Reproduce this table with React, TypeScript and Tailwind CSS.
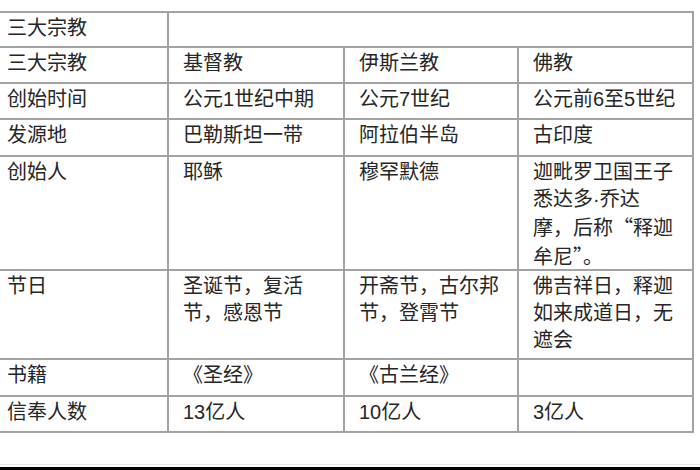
import { Fragment } from "react";

type Cell = { lines: string[]; span?: number };

// rows of the comparison table; explicit lines to match wrapping in the source
const rows: Cell[][] = [
  [{ lines: ["三大宗教"] }, { lines: [""], span: 3 }],
  [{ lines: ["三大宗教"] }, { lines: ["基督教"] }, { lines: ["伊斯兰教"] }, { lines: ["佛教"] }],
  [{ lines: ["创始时间"] }, { lines: ["公元1世纪中期"] }, { lines: ["公元7世纪"] }, { lines: ["公元前6至5世纪"] }],
  [{ lines: ["发源地"] }, { lines: ["巴勒斯坦一带"] }, { lines: ["阿拉伯半岛"] }, { lines: ["古印度"] }],
  [
    { lines: ["创始人"] },
    { lines: ["耶稣"] },
    { lines: ["穆罕默德"] },
    { lines: ["迦毗罗卫国王子", "悉达多·乔达", "摩，后称“释迦", "牟尼”。"] },
  ],
  [
    { lines: ["节日"] },
    { lines: ["圣诞节，复活", "节，感恩节"] },
    { lines: ["开斋节，古尔邦", "节，登霄节"] },
    { lines: ["佛吉祥日，释迦", "如来成道日，无", "遮会"] },
  ],
  [{ lines: ["书籍"] }, { lines: ["《圣经》"] }, { lines: ["《古兰经》"] }, { lines: [""] }],
  [{ lines: ["信奉人数"] }, { lines: ["13亿人"] }, { lines: ["10亿人"] }, { lines: ["3亿人"] }],
];

// curly quotes should take full CJK width, like the source
function Line({ text }: { text: string }) {
  const parts = text.split(/([“”])/);
  return (
    <div>
      {parts.map((p, i) =>
        p === "“" || p === "”" ? (
          <span key={i} style={{ fontFamily: '"Noto Sans CJK SC", sans-serif' }}>
            {p}
          </span>
        ) : (
          <Fragment key={i}>{p}</Fragment>
        )
      )}
    </div>
  );
}

export default function App() {
  return (
    <div
      className="w-[700px] h-[470px] bg-white flex flex-col text-[#262626]"
      style={{ fontFamily: '"Liberation Sans", "Noto Sans CJK SC", sans-serif' }}
    >
      <div className="mt-[11px] w-[694px] grid gap-[2px] bg-[#a3a3a3] pt-[2px] pr-[2px] pb-[2px] grid-cols-[167px_174px_172px_173px] grid-rows-[33px_34px_34px_35px_112px_87px_35px_34px]">
        {rows.map((row, ri) => (
          <Fragment key={ri}>
            {row.map((cell, ci) => (
              <div
                key={ci}
                className={`bg-white pt-[2px] text-[20px] leading-[27px] whitespace-nowrap ${
                  ci === 0 ? "pl-[7px]" : "pl-[14px]"
                } ${cell.span === 3 ? "col-span-3" : ""}`}
              >
                {cell.lines.map((l, li) => (
                  <Line key={li} text={l} />
                ))}
              </div>
            ))}
          </Fragment>
        ))}
      </div>
      <div className="mt-auto h-px bg-[#e6e6e6] mb-[2px]" />
      <div className="h-[3px] bg-black" />
    </div>
  );
}
